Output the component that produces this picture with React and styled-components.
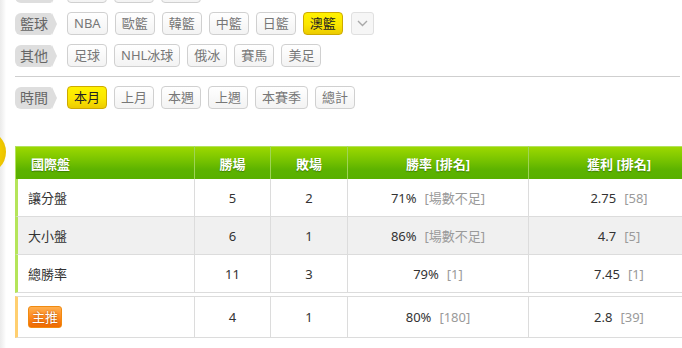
import React from "react";
import styled, { createGlobalStyle, css } from "styled-components";

const Global = createGlobalStyle`
  html, body { margin: 0; padding: 0; overflow: hidden; }
  body {
    background: linear-gradient(to right, #ebebeb 0px, #f4f4f4 3px, #fbfbfb 5px, #ffffff 6px);
    font-family: "Noto Sans", "Noto Sans CJK TC", sans-serif;
    color: #333;
  }
`;

const Page = styled.div`
  position: relative;
  width: 682px;
  height: 348px;
  overflow: hidden;
`;

const Filters = styled.div`
  display: flex;
  flex-direction: column;
  gap: 9px;
  padding-left: 15px;
  margin-top: -20px;
`;

const Row = styled.div`
  display: flex;
  align-items: center;
  gap: 7px;
  height: 23px;
`;

const Label = styled.span`
  position: relative;
  display: inline-block;
  height: 22px;
  line-height: 22px;
  padding: 0 4px 0 5px;
  margin-right: 8px;
  background: #dedede;
  color: #666;
  font-size: 14px;
  border-radius: 6px 2px 2px 6px;
  &::after {
    content: "";
    position: absolute;
    left: 100%;
    top: 0;
    border-left: 5px solid #dedede;
    border-top: 11px solid transparent;
    border-bottom: 11px solid transparent;
  }
`;

const Btn = styled.span`
  display: inline-block;
  box-sizing: border-box;
  height: 23px;
  line-height: 21px;
  padding: 0 6px;
  font-size: 13px;
  border-radius: 4px;
  border: 1px solid #d0d0d0;
  background: linear-gradient(#ffffff, #f3f3f3);
  color: #777;
  white-space: nowrap;
  ${(p) =>
    p.$active &&
    css`
      border-color: #cdaa00;
      background: linear-gradient(#fff200 0%, #fbe600 55%, #eccb00 100%);
      color: #222;
    `}
`;

const More = styled.span`
  display: inline-flex;
  align-items: center;
  justify-content: center;
  box-sizing: border-box;
  width: 23px;
  height: 23px;
  border: 1px solid #e0e0e0;
  border-radius: 3px;
  background: #f6f6f6;
  margin-left: 1px;
`;

const Divider = styled.div`
  height: 1px;
  background: #cfcfcf;
  margin-right: 2px;
`;

const Badge = styled.div`
  position: absolute;
  left: -38px;
  top: 130px;
  width: 44px;
  height: 44px;
  border-radius: 50%;
  background: radial-gradient(circle at 40% 50%, #ffe000 0%, #f2cc00 60%, #e0b400 100%);
`;

const Table = styled.div`
  margin: 37px 0 0 15px;
  width: 700px;
`;

const COLS = "180px 76px 77px 181px 181px";

const Grid = styled.div`
  display: grid;
  grid-template-columns: ${COLS};
`;

const Group = styled.div`
  margin-top: ${(p) => p.$gap || 0}px;
`;

const HeadCell = styled.div`
  box-sizing: border-box;
  height: 33px;
  display: flex;
  align-items: center;
  justify-content: ${(p) => (p.$left ? "flex-start" : "center")};
  padding-left: ${(p) => (p.$left ? "15px" : "0")};
  border-top: 1px solid #b2e25c;
  border-right: 1px solid #9ed456;
  ${(p) => p.$left && "border-left: 1px solid #b2e25c;"}
  background: linear-gradient(#9cd800 0%, #79c400 40%, #5db300 70%, #58b000 100%);
  color: #fff;
  font-size: 13px;
  font-weight: bold;
  text-shadow: 0 1px 1px rgba(40, 90, 0, 0.6);
`;

const Cell = styled.div`
  box-sizing: border-box;
  height: ${(p) => p.$h || 38}px;
  display: flex;
  align-items: center;
  justify-content: ${(p) => (p.$left ? "flex-start" : "center")};
  padding-left: ${(p) => (p.$left ? "10px" : "0")};
  border-right: 1px solid #dcdcdc;
  border-bottom: 1px solid #dcdcdc;
  ${(p) => p.$top && "border-top: 1px solid #dcdcdc;"}
  ${(p) => p.$accent && `border-left: 3px solid ${p.$accent};`}
  background: ${(p) => (p.$alt ? "#f0f0f0" : "#ffffff")};
  font-size: 13px;
  color: #333;
`;

const Rank = styled.span`
  color: #9a9a9a;
  margin-left: 8px;
`;

const Tag = styled.span`
  display: inline-block;
  box-sizing: border-box;
  width: 34px;
  height: 22px;
  line-height: 20px;
  text-align: center;
  border: 1px solid #f08a10;
  border-radius: 3px;
  background: linear-gradient(#ffb050 0%, #ff8a20 50%, #f06a00 100%);
  color: #fff;
  font-size: 13px;
  text-shadow: 0 0 2px rgba(150, 60, 0, 0.9);
`;

const Chevron = () => (
  <svg width="11" height="7" viewBox="0 0 11 7">
    <path d="M1 1l4.5 4.5L10 1" fill="none" stroke="#a8a8a8" strokeWidth="1.4" />
  </svg>
);

const filterRows = [
  { label: "足球", items: ["英超", "西甲", "德甲"] },
  { label: "籃球", items: ["NBA", "歐籃", "韓籃", "中籃", "日籃", "澳籃"], active: "澳籃", more: true },
  { label: "其他", items: ["足球", "NHL冰球", "俄冰", "賽馬", "美足"] },
];

const timeRow = { label: "時間", items: ["本月", "上月", "本週", "上週", "本賽季", "總計"], active: "本月" };

const FilterRow = ({ label, items, active, more }) => (
  <Row>
    <Label>{label}</Label>
    {items.map((t) => (
      <Btn key={t} $active={t === active}>{t}</Btn>
    ))}
    {more && (
      <More>
        <Chevron />
      </More>
    )}
  </Row>
);

const rows = [
  { name: "讓分盤", w: 5, l: 2, rate: "71%", rr: "[場數不足]", p: "2.75", pr: "[58]" },
  { name: "大小盤", w: 6, l: 1, rate: "86%", rr: "[場數不足]", p: "4.7", pr: "[5]", alt: true },
  { name: "總勝率", w: 11, l: 3, rate: "79%", rr: "[1]", p: "7.45", pr: "[1]" },
];

export default function App() {
  return (
    <Page>
      <Global />
      <Badge />
      <Filters>
        {filterRows.map((r) => (
          <FilterRow key={r.label} {...r} />
        ))}
        <Divider />
        <FilterRow {...timeRow} />
      </Filters>
      <Table>
        <Group>
          <Grid>
            <HeadCell $left>國際盤</HeadCell>
            <HeadCell>勝場</HeadCell>
            <HeadCell>敗場</HeadCell>
            <HeadCell>勝率 [排名]</HeadCell>
            <HeadCell>獲利 [排名]</HeadCell>
          </Grid>
          {rows.map((r) => (
            <Grid key={r.name}>
              <Cell $left $accent="#b5e55a" $alt={r.alt}>{r.name}</Cell>
              <Cell $alt={r.alt}>{r.w}</Cell>
              <Cell $alt={r.alt}>{r.l}</Cell>
              <Cell $alt={r.alt}>
                {r.rate}
                <Rank>{r.rr}</Rank>
              </Cell>
              <Cell $alt={r.alt}>
                {r.p}
                <Rank>{r.pr}</Rank>
              </Cell>
            </Grid>
          ))}
        </Group>
        <Group $gap={3}>
          <Grid>
            <Cell $left $top $h={42} $accent="#ffcf70">
              <Tag>主推</Tag>
            </Cell>
            <Cell $top $h={42}>4</Cell>
            <Cell $top $h={42}>1</Cell>
            <Cell $top $h={42}>
              80%
              <Rank>[180]</Rank>
            </Cell>
            <Cell $top $h={42}>
              2.8
              <Rank>[39]</Rank>
            </Cell>
          </Grid>
        </Group>
      </Table>
    </Page>
  );
}
